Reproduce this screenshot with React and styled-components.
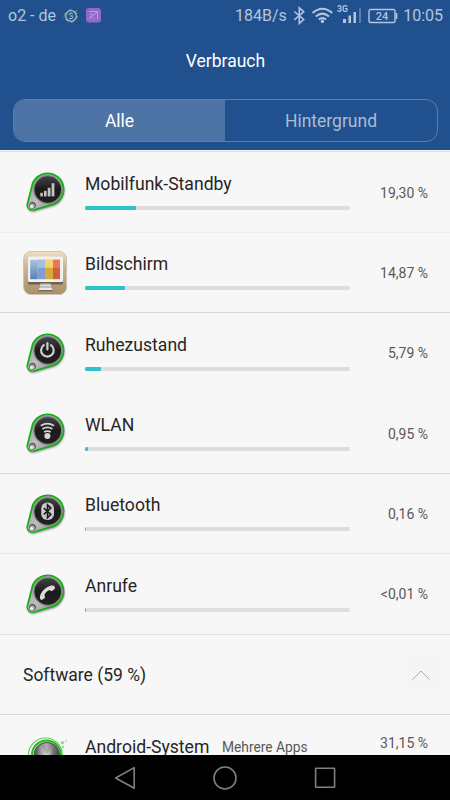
import React from 'react';
import styled, { createGlobalStyle } from 'styled-components';

const GlobalStyle = createGlobalStyle`
  body {
    margin: 0;
    background: #f7f7f7;
    font-family: Roboto, sans-serif;
  }
`;

const Screen = styled.div`
  display: flex;
  flex-direction: column;
  width: 450px;
  height: 800px;
  overflow: hidden;
  background: #f7f7f7;
`;

const Header = styled.header`
  flex: none;
  height: 150px;
  background: #20508e;
  border-bottom: 1px solid #f5f7fa;
  box-shadow: 0 1px 0 #dedede;
  margin-bottom: 0.6px;
`;

const StatusBar = styled.div`
  display: flex;
  align-items: center;
  justify-content: space-between;
  height: 32px;
  padding: 0 7px 0 8px;
  box-sizing: border-box;
  color: #b5c5db;
  font-size: 16px;
`;

const StatusGroup = styled.div`
  display: flex;
  align-items: center;
  height: 32px;

  svg {
    display: block;
    flex: none;
  }
`;

const StatusText = styled.span`
  width: ${(p) => p.$width}px;
  line-height: 32px;
  white-space: nowrap;
  text-align: ${(p) => p.$align || 'left'};
`;

const Title = styled.h1`
  margin: 0;
  height: 58px;
  line-height: 58px;
  padding-left: 1px;
  text-align: center;
  font-size: 17.5px;
  font-weight: 400;
  color: #fff;
`;

const Tabs = styled.div`
  display: flex;
  height: 43px;
  margin: 9px 12px 0 13px;
  box-sizing: border-box;
  border: 1px solid #597fae;
  border-radius: 12px;
  overflow: hidden;
`;

const Tab = styled.button`
  flex: ${(p) => (p.$active ? '0 0 211px' : 1)};
  padding: 0;
  border: none;
  background: ${(p) => (p.$active ? '#4e74a6' : 'transparent')};
  color: ${(p) => (p.$active ? '#fff' : '#a9bdd6')};
  font: 400 17.5px Roboto, sans-serif;
`;

const List = styled.main`
  flex: 1;
  min-height: 0;
  overflow: hidden;
`;

const Row = styled.div`
  display: flex;
  align-items: center;
  height: 80.35px;
  padding: 0 22px 0 23px;
  box-sizing: border-box;
  border-top: 1px solid ${(p) => p.$line || 'transparent'};
`;

const IconBox = styled.div`
  flex: none;
  width: 44px;
  height: 44px;
  margin-right: 18px;

  svg {
    display: block;
  }
`;

const Info = styled.div`
  width: 265px;
  height: 80px;
  padding-top: 19.8px;
  box-sizing: border-box;
`;

const Name = styled.div`
  height: 24px;
  line-height: 24px;
  margin-bottom: 10px;
  font-size: 17.6px;
  color: #262626;
  white-space: nowrap;
`;

const Track = styled.div`
  height: 4px;
  border-radius: 1.5px;
  background: #dedede;
  overflow: hidden;
`;

const Fill = styled.div`
  height: 4px;
  border-radius: 1px;
  background: #2dc3cb;
`;

const Percent = styled.div`
  flex: 1;
  padding-top: 1px;
  text-align: right;
  font-size: 14px;
  color: #595959;
  white-space: nowrap;
`;

const SectionTitle = styled.div`
  flex: 1;
  padding-top: 1px;
  font-size: 17.5px;
  color: #262626;
`;

const Toggle = styled.div`
  display: flex;
  align-items: center;
  justify-content: center;
  width: 39px;
  height: 39px;
  margin-right: -12px;
  padding-top: 1px;
  background: #f5f5f5;
`;

const AppRow = styled.div`
  display: flex;
  align-items: flex-start;
  height: 80px;
  padding: 19.5px 22px 0 23px;
  border-top: 1px solid #d8d8d8;
`;

const AppName = styled(Name)`
  width: 137px;
`;

const AppNote = styled.div`
  line-height: 24px;
  font-size: 13.8px;
  color: #595959;
`;

const AppPercent = styled(Percent)`
  padding-top: 0;
  line-height: 17px;
`;

const NavBar = styled.nav`
  flex: none;
  display: flex;
  align-items: center;
  justify-content: center;
  gap: 76px;
  height: 45px;
  background: #000;
`;

const Glyph = ({ kind }) => {
  switch (kind) {
    case 'signal':
      return (
        <g fill="#c4c4c4">
          <rect x="17.3" y="22" width="2.6" height="3.6" />
          <rect x="21" y="20" width="2.6" height="5.6" />
          <rect x="24.7" y="17" width="2.8" height="8.6" />
          <rect x="28.6" y="12.4" width="2.8" height="13.2" />
        </g>
      );
    case 'power':
      return (
        <g fill="none" stroke="#cfcfcf" strokeWidth="2.2" strokeLinecap="round">
          <path d="M20.8 13.4a6.3 6.3 0 1 0 7.2 0" />
          <path d="M24.4 11.4v6.2" />
        </g>
      );
    case 'wifi':
      return (
        <g fill="none" stroke="#d6d6d6" strokeWidth="1.7">
          <path d="M17.8 14q6.6-4.4 13.2 0M19.4 17.2q5-3.2 10 0M21.1 20.3q3.3-2 6.6 0" />
          <circle cx="24.4" cy="24.2" r="2.2" fill="#d6d6d6" />
        </g>
      );
    case 'bluetooth':
      return (
        <g>
          <rect x="18.2" y="9.8" width="12.8" height="17.4" rx="6" fill="#c9c9c9" />
          <path
            d="M20.8 15.3l7 6.3-3.3 3.3v-12.8l3.3 3.2-7 6.3"
            fill="none"
            stroke="#1b1b1b"
            strokeWidth="1.6"
          />
        </g>
      );
    default:
      return (
        <path
          d="M17 23.6c-.4 2.2.9 4 2.2 3.4l2.6-1.9c.9-.9-.5-1.9-.4-2.8.8-2 2.7-4.1 4.8-5 .8-.1 1.8 1.4 2.8.8l2.6-1.9c1.2-1.5-.6-4-3-3.5-5.2 1-10.7 5.9-11.6 10.9z"
          fill="#dcdcdc"
        />
      );
  }
};

const BADGE_PATH = 'M8.8 16.6A16 16 0 1 1 29.2 34.6L10.8 40A5.2 5.2 0 0 1 4.3 34.6z';

const BadgeIcon = ({ kind }) => (
  <svg width="44" height="44" viewBox="0 0 44 44">
    <defs>
      <linearGradient id={`${kind}-metal`} x1="0" y1="0" x2="1" y2="1">
        <stop offset="0" stopColor="#8a8a8a" />
        <stop offset=".5" stopColor="#c0c0c0" />
        <stop offset="1" stopColor="#777" />
      </linearGradient>
      <linearGradient id={`${kind}-face`} x1="0" y1="0" x2="0" y2="1">
        <stop offset="0" stopColor="#444" />
        <stop offset=".5" stopColor="#1b1b1b" />
        <stop offset="1" stopColor="#202020" />
      </linearGradient>
      <filter id={`${kind}-soft`} x="-20%" y="-20%" width="140%" height="140%">
        <feGaussianBlur stdDeviation="1" />
      </filter>
    </defs>
    <path
      d={BADGE_PATH}
      fill="#000"
      opacity=".5"
      transform="translate(.6 1.6)"
      filter={`url(#${kind}-soft)`}
    />
    <path d={BADGE_PATH} fill={`url(#${kind}-metal)`} stroke="#12b012" strokeWidth="1.8" />
    <circle cx="24.8" cy="19.5" r="13.9" fill={`url(#${kind}-face)`} stroke="#858585" strokeWidth="1.3" />
    <circle cx="9.5" cy="35.4" r="3.9" fill="#444" stroke="#d0d0d0" strokeWidth=".8" />
    <circle cx="9.3" cy="35.8" r="2.6" fill="#aaa" />
    <circle cx="8.7" cy="36.4" r="1.5" fill="#f4f4f4" />
    <g transform="translate(0 .8)">
      <Glyph kind={kind} />
    </g>
  </svg>
);

const DisplayIcon = () => (
  <svg width="44" height="44" viewBox="0 0 44 44">
    <defs>
      <linearGradient id="wood" x1="0" y1="0" x2="0" y2="1">
        <stop offset="0" stopColor="#efdfc4" />
        <stop offset=".35" stopColor="#cdb68f" />
        <stop offset="1" stopColor="#a98f69" />
      </linearGradient>
      <linearGradient id="blue" x1="0" y1="0" x2="0" y2="1">
        <stop offset="0" stopColor="#a9c2df" />
        <stop offset="1" stopColor="#587fb8" />
      </linearGradient>
      <linearGradient id="stand" x1="0" y1="0" x2="0" y2="1">
        <stop offset="0" stopColor="#777" />
        <stop offset=".5" stopColor="#e4e4e4" />
        <stop offset="1" stopColor="#999" />
      </linearGradient>
    </defs>
    <rect x=".6" y=".4" width="43" height="43.2" rx="7.5" fill="url(#wood)" stroke="#c9c2b7" strokeWidth="1" />
    <rect x="5" y="7" width="35" height="26.5" rx="1.5" fill="#6e6350" />
    <rect x="5" y="5.5" width="35" height="25.5" rx="1.5" fill="#f1f1f1" />
    <rect x="7.2" y="8.8" width="7.6" height="19.4" fill="url(#blue)" />
    <rect x="14.8" y="8.8" width="7.2" height="19.4" fill="#7f9fd0" />
    <rect x="14.8" y="8.8" width="7.2" height="8" fill="#a7bfdf" />
    <rect x="22" y="8.8" width="8" height="19.4" fill="#d9a83a" />
    <rect x="22" y="8.8" width="8" height="8" fill="#f6d36c" />
    <rect x="30" y="8.8" width="7" height="19.4" fill="#cf6039" />
    <rect x="30" y="8.8" width="7" height="8" fill="#e57a55" />
    <path d="M17.5 32h10l.8 4.6H16.7z" fill="url(#stand)" />
    <path d="M16.7 36.6h11.6l1.2 2.4H15.5z" fill="#e9e9e9" />
    <path d="M15.5 39h14v1.3h-14z" fill="#75695a" />
  </svg>
);

const KnobIcon = () => (
  <svg width="44" height="44" viewBox="0 0 44 44">
    <defs>
      <linearGradient id="knob" x1="0" y1="0" x2="1" y2="0">
        <stop offset="0" stopColor="#444" />
        <stop offset=".25" stopColor="#999" />
        <stop offset=".5" stopColor="#ddd" />
        <stop offset=".75" stopColor="#777" />
        <stop offset="1" stopColor="#444" />
      </linearGradient>
    </defs>
    <circle cx="22.4" cy="20" r="17" fill="none" stroke="#62cf5a" strokeWidth="1.2" />
    <circle cx="23.4" cy="20" r="14.5" fill="#ddd" stroke="#20bc18" strokeWidth="1.8" />
    <circle cx="23.8" cy="20.2" r="12.6" fill="url(#knob)" stroke="#555" strokeWidth="1.2" />
    <path d="M23.8 19.5L18 10.2q6-3.3 11.6 0z" fill="#777" opacity=".45" />
    <circle cx="39.4" cy="7.8" r="1.7" fill="#9bd49a" />
    <circle cx="40" cy="12" r="1" fill="#81bc80" />
    <path d="M42 6h2" stroke="#9bd49a" />
  </svg>
);

const rows = [
  { name: 'Mobilfunk-Standby', value: '19,30 %', share: 19.3, icon: 'signal' },
  { name: 'Bildschirm', value: '14,87 %', share: 15, icon: 'display', line: '#eeeeee' },
  { name: 'Ruhezustand', value: '5,79 %', share: 5.9, icon: 'power', line: '#d8d8d8' },
  { name: 'WLAN', value: '0,95 %', share: 1.1, icon: 'wifi' },
  { name: 'Bluetooth', value: '0,16 %', share: 0.38, icon: 'bluetooth', line: '#d8d8d8' },
  { name: 'Anrufe', value: '<0,01 %', share: 0.38, icon: 'phone', line: '#e6e6e6' },
];

function StatusIcons() {
  return (
    <svg width="106" height="32" viewBox="292 0 106 32" fill="none" stroke="#b5c5db">
      <path d="M294.3 11.5l9.4 8-4.4 4V7.8l4.4 4-9.4 8" strokeWidth="1.6" />
      <g strokeWidth="2">
        <path d="M312.5 13q9.8-8.5 19.8 0M315.7 16.4q6.7-5.6 13.4 0M318.8 19.5q3.6-2.8 7.2 0" />
      </g>
      <circle cx="322.4" cy="21.4" r="1.7" fill="#b5c5db" stroke="none" />
      <text x="337" y="11.6" fill="#b5c5db" stroke="none" fontSize="8.6" fontWeight="700" fontFamily="Roboto">
        3G
      </text>
      <g fill="#b5c5db" stroke="none">
        <rect x="343" y="19" width="3" height="4" />
        <rect x="348.5" y="15.5" width="2.5" height="7.5" />
        <rect x="353.5" y="12" width="2.5" height="11" />
        <rect x="359" y="8.5" width="2" height="14.5" opacity=".4" />
      </g>
      <rect x="369" y="9.5" width="26" height="13" rx="1.8" strokeWidth="1.4" />
      <path d="M396.5 13v6" strokeWidth="1.6" />
      <text
        x="382"
        y="20"
        fill="#b5c5db"
        stroke="none"
        fontSize="11"
        fontWeight="500"
        fontFamily="Roboto"
        textAnchor="middle"
      >
        24
      </text>
    </svg>
  );
}

function NoticeIcons() {
  return (
    <svg width="40" height="32" viewBox="62 0 40 32" fill="none">
      <circle cx="71" cy="16" r="5.3" stroke="#a6c0cf" strokeWidth="1.3" />
      <circle cx="71" cy="16" r="6.4" stroke="#76a85f" strokeWidth="1" strokeDasharray="3 3.7" />
      <path d="M68.8 15.2q.5-2 2.2-2t2 1M73 16.8q-.4 2-2.1 2t-2.1-1M70 16h3" stroke="#b7c8d8" />
      <path d="M64 16.5v1M76.5 10v1" stroke="#78a961" />
      <rect x="86" y="8" width="15" height="14.5" rx="3" fill="#9268cd" />
      <path d="M89.5 11.5h8v7.5M97 12l-7.5 7M90 14l3 1.2" stroke="#c5afe2" strokeWidth=".8" />
      <path d="M90 16.5h1M93.5 18.5h1" stroke="#c5afe2" />
    </svg>
  );
}

function App() {
  return (
    <Screen>
      <GlobalStyle />
      <Header>
        <StatusBar>
          <StatusGroup>
            <StatusText $width={54}>o2 - de</StatusText>
            <NoticeIcons />
          </StatusGroup>
          <StatusGroup>
            <StatusText $width={57}>184B/s</StatusText>
            <StatusIcons />
            <StatusText $width={45} $align="right">
              10:05
            </StatusText>
          </StatusGroup>
        </StatusBar>
        <Title>Verbrauch</Title>
        <Tabs>
          <Tab $active>Alle</Tab>
          <Tab>Hintergrund</Tab>
        </Tabs>
      </Header>
      <List>
        {rows.map((row) => (
          <Row key={row.name} $line={row.line}>
            <IconBox>{row.icon === 'display' ? <DisplayIcon /> : <BadgeIcon kind={row.icon} />}</IconBox>
            <Info>
              <Name>{row.name}</Name>
              <Track>
                <Fill style={{ width: `${row.share}%` }} />
              </Track>
            </Info>
            <Percent>{row.value}</Percent>
          </Row>
        ))}
        <Row $line="#e2e2e2">
          <SectionTitle>Software (59 %)</SectionTitle>
          <Toggle>
            <svg width="20" height="12" viewBox="0 0 20 12" fill="none" stroke="#aaa">
              <path d="M1.5 10.5L10 2l8.5 8.5" />
            </svg>
          </Toggle>
        </Row>
        <AppRow>
          <IconBox>
            <KnobIcon />
          </IconBox>
          <AppName>Android-System</AppName>
          <AppNote>Mehrere Apps</AppNote>
          <AppPercent>31,15 %</AppPercent>
        </AppRow>
      </List>
      <NavBar>
        <svg width="24" height="24" viewBox="0 0 24 24" fill="none" stroke="#808080" strokeWidth="1.6">
          <path d="M21.2 1.6v20.6L2.6 12z" strokeLinejoin="round" />
        </svg>
        <svg width="24" height="24" viewBox="0 0 24 24" fill="none" stroke="#808080" strokeWidth="1.6">
          <circle cx="12" cy="12" r="11" />
        </svg>
        <svg width="24" height="24" viewBox="0 0 24 24" fill="none" stroke="#808080" strokeWidth="1.6">
          <rect x="2.6" y="2.2" width="19" height="19" rx=".5" />
        </svg>
      </NavBar>
    </Screen>
  );
}

export default App;
